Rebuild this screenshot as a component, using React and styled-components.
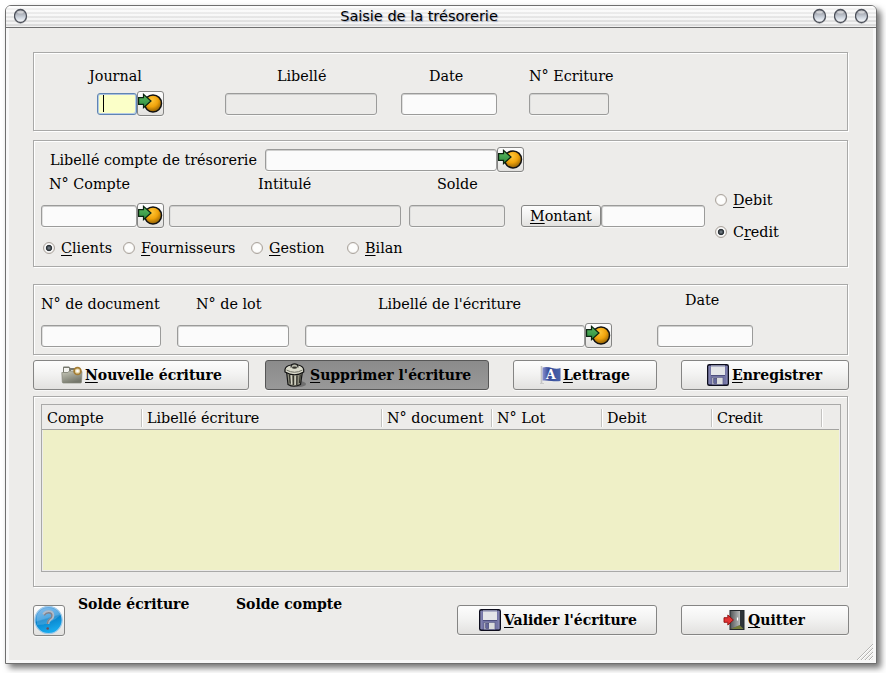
import React from 'react';
import styled, { createGlobalStyle, css } from 'styled-components';

const Global = createGlobalStyle`
  * { box-sizing: border-box; }
  body { margin: 0; background: #fff; overflow: hidden; }
`;

const serif = `'DejaVu Serif', serif`;

const Desktop = styled.div`
  width: 886px;
  height: 673px;
  padding: 5px 0 0 5px;
  background: #fff;
  color: #000;
  font: 14.35px/20px ${serif};
`;

const Window = styled.div`
  width: 872px;
  height: 659px;
  border: 1px solid #6f6f6f;
  border-radius: 6px 6px 0 0;
  background: #f8f8f8;
  box-shadow: 4px 4px 6px rgba(0, 0, 0, 0.55);
`;

const TitleBar = styled.header`
  display: flex;
  align-items: flex-start;
  height: 22px;
  padding: 2px 7px 0 8px;
  border-bottom: 1px solid #6f6f6f;
  border-radius: 5px 5px 0 0;
  background:
    linear-gradient(rgba(255, 255, 255, 0.7), rgba(215, 215, 215, 0.2)),
    repeating-linear-gradient(#f8f8f8 0 2px, #dadada 2px 4px);
`;

const Title = styled.h1`
  flex: 1;
  margin: -2px 0 0;
  padding-right: 3px;
  text-align: center;
  font: 14.5px/20px 'DejaVu Sans', sans-serif;
  text-shadow: 1px 1px 1px #9aa4bb;
`;

const Controls = styled.div`
  display: flex;
  gap: 7px;
`;

const Client = styled.main`
  height: 632px;
  margin: 0 3px 3px;
  padding: 24px 0 0 24px;
  background: #edecea;
  position: relative;
`;

const Panel = styled.section`
  width: 815px;
  height: ${p => p.$h}px;
  margin-bottom: ${p => p.$mb}px;
  padding: ${p => p.$pad};
  border: 1px solid #a9a9a8;
  box-shadow: 1px 1px 0 #fff, inset 1px 1px 0 #fff;
`;

const Row = styled.div`
  display: flex;
  align-items: ${p => p.$align || 'center'};
  height: ${p => p.$h}px;
  margin-bottom: ${p => p.$mb || 0}px;
`;

const Split = styled.div`
  display: flex;
`;

const LeftColumn = styled.div`
  width: 671px;
`;

const RadioColumn = styled.div`
  display: flex;
  flex-direction: column;
  gap: 12px;
  padding: 43px 0 0 3px;
`;

const Label = styled.span`
  flex: none;
  align-self: ${p => (p.$top ? 'flex-start' : 'auto')};
  width: ${p => p.$w}px;
  margin-left: ${p => p.$ml || 0}px;
  white-space: nowrap;
  ${p => p.$bold && css`
    font-size: 14px;
    font-weight: bold;
  `}
`;

const Input = styled.div`
  flex: none;
  width: ${p => p.$w}px;
  height: 22px;
  margin-left: ${p => p.$ml || 0}px;
  border: 1px solid #9b9b9a;
  border-radius: 3px;
  background: ${p => (p.$disabled ? '#ecebe9' : '#fbfbfb')};
  box-shadow: inset 0 1px 0 #cfcfce, inset 1px 0 0 #e0e0df, 0 1px 0 #f8f8f7;
  ${p => p.$focused && css`
    display: flex;
    align-items: center;
    padding-left: 5px;
    border-color: #5f84b4;
    background: #fbffc8;
    box-shadow: inset 0 1px 0 #a9c0dd, inset 1px 0 0 #b5cbe6, inset -1px -1px 0 #b5cbe6;
  `}
`;

const Caret = styled.i`
  width: 1px;
  height: 17px;
  background: #000;
`;

const raised = css`
  border: 1px solid #858584;
  border-radius: 3px;
  background: linear-gradient(#fdfdfd, #f3f3f2 45%, #e2e1df);
  box-shadow: 0 1px 0 #f8f8f7;
  color: #000;
`;

const IconButton = styled.button`
  ${raised}
  display: flex;
  flex: none;
  width: ${p => p.$w}px;
  height: ${p => p.$h}px;
  padding: 0;
`;

const Button = styled.button`
  ${raised}
  display: flex;
  flex: none;
  align-items: center;
  width: ${p => p.$w}px;
  height: ${p => p.$h || 30}px;
  margin-left: ${p => p.$ml || 0}px;
  padding: 0 0 0 ${p => p.$pl}px;
  font: ${p => (p.$plain ? 'normal 14.35px' : 'bold 14px')}/20px ${serif};
  white-space: nowrap;
  ${p => p.$pressed && css`
    border-color: #565656;
    background: linear-gradient(#8b8b8b, #999);
  `}
  svg { flex: none; margin-right: ${p => p.$gap || 0}px; }
`;

const Key = styled.span`
  text-decoration: underline;
  text-decoration-thickness: 1px;
  text-underline-offset: 2px;
  text-decoration-skip-ink: none;
`;

const RadioItem = styled.label`
  display: flex;
  flex: none;
  align-items: center;
  gap: 6px;
  width: ${p => p.$w}px;
  height: 20px;
  white-space: nowrap;
`;

const Dot = styled.i`
  flex: none;
  width: 12px;
  height: 12px;
  border: 1px solid #aaa39c;
  border-radius: 50%;
  background: ${p => (p.$on
    ? 'radial-gradient(circle at 5px 5px, #85909a 0, #2b3237 2.4px, #2b3237 2.8px, #fdfdfd 3.6px)'
    : '#fdfdfc')};
  box-shadow: inset 0 0 1px #bbb3ab;
`;

const Table = styled.div`
  width: 800px;
  height: 168px;
  padding: 1px;
  border: 1px solid #a9a9a8;
`;

const HeaderRow = styled.div`
  display: flex;
  align-items: center;
  height: 24px;
  margin-left: -1px;
  border-bottom: 1px solid #a3a3a0;
`;

const HeaderCell = styled.div`
  width: ${p => p.$w}px;
  height: 18px;
  padding-left: 5px;
  border-right: 1px solid #c3c2c0;
  box-shadow: 1px 0 0 #fff;
  line-height: 18px;
  white-space: nowrap;
`;

const TableBody = styled.div`
  height: 140px;
  background: #eff0c7;
`;

const Footer = styled.footer`
  display: flex;
  padding-top: 18px;
`;

const Balances = styled.div`
  display: flex;
  width: 392px;
  margin-top: -11px;
`;

const Grip = styled.svg`
  position: absolute;
  right: 0;
  bottom: 0;
`;

function Orb() {
  return (
    <svg width="14" height="16" viewBox="0 0 14 16">
      <defs>
        <linearGradient id="orb" x1="0" y1="0" x2="0" y2="1">
          <stop offset="0" stopColor="#6d7078" />
          <stop offset=".3" stopColor="#a9adb6" />
          <stop offset=".65" stopColor="#d3dae3" />
          <stop offset="1" stopColor="#fff" />
        </linearGradient>
      </defs>
      <ellipse cx="6.500" cy="8.900" rx="6.500" ry="7" fill="#aaa" opacity=".7" />
      <ellipse cx="6.500" cy="8" rx="6" ry="6.500" fill="url(#orb)" stroke="#4d515b" strokeWidth="1.300" />
      <ellipse cx="6.500" cy="4" rx="3.300" ry="1.500" fill="#fff" opacity=".55" />
    </svg>
  );
}

function GoIcon() {
  return (
    <svg width="25" height="23" viewBox="0 0 25 23">
      <defs>
        <radialGradient id="ball" cx=".42" cy=".32" r=".75">
          <stop offset="0" stopColor="#ffc73a" />
          <stop offset=".5" stopColor="#f0a30b" />
          <stop offset="1" stopColor="#7b5204" />
        </radialGradient>
        <linearGradient id="arrow" x1="0" y1="0" x2="0" y2="1">
          <stop offset="0" stopColor="#5dbb62" />
          <stop offset="1" stopColor="#2b8b3c" />
        </linearGradient>
      </defs>
      <circle cx="15" cy="11.400" r="8.500" fill="url(#ball)" stroke="#111" strokeWidth="1.500" />
      <path d="M.6 5.700H5.500V2.300L13 9 5.500 15.600v-3.300H.6z" fill="url(#arrow)" stroke="#0b2410" strokeWidth="1.200" />
    </svg>
  );
}

function FolderIcon() {
  return (
    <svg width="22" height="18" viewBox="0 0 22 18">
      <defs>
        <linearGradient id="folder" x1="0" y1="0" x2=".5" y2="1">
          <stop offset="0" stopColor="#c9cabb" />
          <stop offset="1" stopColor="#74766a" />
        </linearGradient>
      </defs>
      <path d="M2 15V1.500q0-1 1-1h5L9.500 2H19v13z" fill="#77796f" />
      <path d="M3 2h5v4H3zM10 4h7v2h-7z" fill="#f4f4f0" />
      <path d="M.8 6.500h5.700L8.500 5H20q1 0 1 1l-.5 10q0 1-1 1H2.300q-1 0-1-1z" fill="url(#folder)" stroke="#85877a" strokeWidth=".7" />
      <circle cx="16.500" cy="5" r="3.400" fill="#e8d9ad" stroke="#a37c33" strokeWidth="1.700" />
      <circle cx="16.500" cy="5" r="1.300" fill="#fff" />
    </svg>
  );
}

function TrashIcon() {
  return (
    <svg width="24" height="26" viewBox="0 0 24 26">
      <ellipse cx="15" cy="22" rx="7" ry="3" fill="#555" opacity=".6" />
      <path d="M2.500 9L4 22.500q6 3.500 12.500 0L18.500 9z" fill="#8e8e7e" stroke="#161616" strokeWidth="1.200" />
      <path d="M5.500 12.500l.7 9M9.300 13.500v9.500M13 13.500l-.2 9.500M16.300 12.500l-.8 8.500" stroke="#34342d" strokeWidth="1.300" />
      <path d="M7.300 13l.4 9.500M11.200 13.500V23" stroke="#d5d5c6" strokeWidth="1.300" />
      <path d="M1 7.500Q1.500 4 7 3q3.500-2 7 0 5 1 5.700 4.500v2.500q-9 5.500-18.700 0z" fill="#d9d9ca" stroke="#111" strokeWidth="1.200" />
      <path d="M2.500 8q8 4.500 16 0" fill="none" stroke="#6f7065" />
      <path d="M7 5.500Q7 2 10.500 2T14 5.500" fill="#bbbcae" stroke="#222" strokeWidth="1.100" />
      <ellipse cx="10.500" cy="5.700" rx="2.500" ry="1.100" fill="#34342d" />
    </svg>
  );
}

const FlagLetter = styled.text`
  font: bold 12.5px ${serif};
  fill: #fff;
`;

function FlagIcon() {
  return (
    <svg width="22" height="20" viewBox="0 0 22 20">
      <defs>
        <linearGradient id="flag">
          <stop offset="0" stopColor="#8a8fcc" />
          <stop offset=".35" stopColor="#354a98" />
          <stop offset="1" stopColor="#4a64ac" />
        </linearGradient>
      </defs>
      <path d="M1.500 1v17" stroke="#c4c4c4" strokeWidth="1.600" />
      <path d="M0 18.500h4" stroke="#c9c9c9" />
      <path d="M2.500 2.500Q7 1.500 12 3t8.500 0v13q-4.500 .7-9 0t-9-.5z" fill="url(#flag)" />
      <FlagLetter x="6" y="14">A</FlagLetter>
    </svg>
  );
}

function FloppyIcon() {
  return (
    <svg width="22" height="22" viewBox="0 0 22 22">
      <rect x=".75" y=".75" width="20.500" height="20.500" rx="1.500" fill="#7475a6" stroke="#0d0d1c" strokeWidth="1.500" />
      <path d="M2 2v18M20 2v18" stroke="#9596bf" strokeWidth=".8" />
      <rect x="4" y="1.500" width="14" height="9.500" fill="#e4e5e8" />
      <path d="M4 2h14" stroke="#7e81a8" strokeWidth="1" />
      <path d="M4 11.500h14" stroke="#4d4e7c" />
      <rect x="5" y="13.300" width="11" height="7.200" fill="#dadbdc" stroke="#5a5b87" strokeWidth=".7" />
      <rect x="6.700" y="14.300" width="3" height="5.200" fill="#63659c" stroke="#45466f" strokeWidth=".6" />
    </svg>
  );
}

function DoorIcon() {
  return (
    <svg width="22" height="22" viewBox="0 0 22 22">
      <defs>
        <linearGradient id="door">
          <stop offset="0" stopColor="#55585a" />
          <stop offset="1" stopColor="#b9bcbc" />
        </linearGradient>
      </defs>
      <rect x="7" y="1.500" width="14" height="19" fill="#2d3338" stroke="#23282c" />
      <path d="M7.500 20l9-4 4 4z" fill="#757d3a" />
      <path d="M7.500 2H17v14l-9.500 4z" fill="url(#door)" />
      <path d="M14.500 8.500v3" stroke="#fff" strokeWidth="1.200" />
      <path d="M1 8.700h3.800V6l5.600 5-5.600 5v-2.700H1z" fill="#e33434" stroke="#8f0c0c" strokeWidth=".9" />
    </svg>
  );
}

function HelpIcon() {
  return (
    <svg width="30" height="29" viewBox="0 0 30 29">
      <defs>
        <linearGradient id="help" x1="0" y1="0" x2=".3" y2="1">
          <stop offset="0" stopColor="#7fb5e8" />
          <stop offset=".5" stopColor="#3199dc" />
          <stop offset=".55" stopColor="#0781ca" />
          <stop offset="1" stopColor="#18a9ec" />
        </linearGradient>
      </defs>
      <circle cx="14.500" cy="14" r="13.700" fill="url(#help)" stroke="#a3cbe9" strokeWidth="1.200" />
      <path d="M3 19Q16 19 26.500 9 23 2 14.500 2T3 10z" fill="#fff" opacity=".17" />
      <path d="M9.500 8.500Q11 5.500 14.500 5.500q4.500 0 4.500 4 0 2.500-2.500 4t-2.500 4.500" fill="none" stroke="#b0bac8" strokeWidth="2.600" />
      <path d="M10.200 9.300Q12 6.800 14.700 6.800q3.200 0 3.200 2.900 0 2-2.200 3.300t-2.300 5" fill="none" stroke="#82828c" strokeWidth="1.400" />
      <circle cx="13.700" cy="22.500" r="1.300" fill="#744b55" />
    </svg>
  );
}

function LookupButton() {
  return <IconButton $w={27} $h={25}><GoIcon /></IconButton>;
}

function Radio({ on, w, pre = '', letter, children }) {
  return (
    <RadioItem $w={w}>
      <Dot $on={on} />
      <span>{pre}<Key>{letter}</Key>{children}</span>
    </RadioItem>
  );
}

const columns = [
  ['Compte', 100], ['Libellé écriture', 240], ['N° document', 110],
  ['N° Lot', 110], ['Debit', 110], ['Credit', 110],
];

export default function App() {
  return (
    <Desktop>
      <Global />
      <Window>
        <TitleBar>
          <Orb />
          <Title>Saisie de la trésorerie</Title>
          <Controls><Orb /><Orb /><Orb /></Controls>
        </TitleBar>
        <Client>
          <Panel $h={79} $mb={9} $pad="13px 0 0 7px">
            <Row $h={20} $mb={5}>
              <Label $ml={48} $w={188}>Journal</Label>
              <Label $w={152}>Libellé</Label>
              <Label $w={100}>Date</Label>
              <Label $w={100}>N° Ecriture</Label>
            </Row>
            <Row $h={25}>
              <Input $ml={56} $w={40} $focused><Caret /></Input>
              <LookupButton />
              <Input $ml={61} $w={152} $disabled />
              <Input $ml={24} $w={96} />
              <Input $ml={32} $w={80} $disabled />
            </Row>
          </Panel>

          <Panel $h={127} $mb={17} $pad="6px 0 0 7px">
            <Split>
              <LeftColumn>
                <Row $h={25} $mb={2}>
                  <Label $ml={9} $w={215}>Libellé compte de trésorerie</Label>
                  <Input $w={232} />
                  <LookupButton />
                </Row>
                <Row $h={20} $mb={9}>
                  <Label $ml={8} $w={209}>N° Compte</Label>
                  <Label $w={179}>Intitulé</Label>
                  <Label $w={60}>Solde</Label>
                </Row>
                <Row $h={25} $mb={10}>
                  <Input $w={96} />
                  <LookupButton />
                  <Input $ml={5} $w={232} $disabled />
                  <Input $ml={8} $w={96} $disabled />
                  <Button $ml={16} $w={80} $h={22} $pl={8} $plain><span><Key>M</Key>ontant</span></Button>
                  <Input $w={104} />
                </Row>
                <Row $h={20}>
                  <Label $w={2} />
                  <Radio w={80} letter="C" on>lients</Radio>
                  <Radio w={128} letter="F">ournisseurs</Radio>
                  <Radio w={96} letter="G">estion</Radio>
                  <Radio w={80} letter="B">ilan</Radio>
                </Row>
              </LeftColumn>
              <RadioColumn>
                <Radio w={80} letter="D">ebit</Radio>
                <Radio w={80} pre="C" letter="r" on>edit</Radio>
              </RadioColumn>
            </Split>
          </Panel>

          <Panel $h={71} $mb={5} $pad="5px 0 0 7px">
            <Row $h={24} $mb={9} $align="flex-end">
              <Label $w={155}>N° de document</Label>
              <Label $w={182}>N° de lot</Label>
              <Label $w={307}>Libellé de l'écriture</Label>
              <Label $w={60} $top>Date</Label>
            </Row>
            <Row $h={25}>
              <Input $w={120} />
              <Input $ml={16} $w={112} />
              <Input $ml={16} $w={280} />
              <LookupButton />
              <Input $ml={45} $w={96} />
            </Row>
          </Panel>

          <Row $h={30} $mb={6}>
            <Button $w={216} $pl={27} $gap={2}><FolderIcon /><span><Key>N</Key>ouvelle écriture</span></Button>
            <Button $ml={16} $w={224} $pl={18} $gap={2} $pressed><TrashIcon /><span><Key>S</Key>upprimer l'écriture</span></Button>
            <Button $ml={24} $w={144} $pl={26} $gap={1}><FlagIcon /><span><Key>L</Key>ettrage</span></Button>
            <Button $ml={24} $w={168} $pl={25} $gap={3}><FloppyIcon /><span><Key>E</Key>nregistrer</span></Button>
          </Row>

          <Panel $h={191} $mb={0} $pad="7px 0 0 7px">
            <Table>
              <HeaderRow>
                {columns.map(([name, w]) => <HeaderCell key={name} $w={w}>{name}</HeaderCell>)}
              </HeaderRow>
              <TableBody />
            </Table>
          </Panel>

          <Footer>
            <IconButton $w={32} $h={31}><HelpIcon /></IconButton>
            <Balances>
              <Label $bold $ml={13} $w={158}>Solde écriture</Label>
              <Label $bold $w={120}>Solde compte</Label>
            </Balances>
            <Button $w={200} $pl={21} $gap={3}><FloppyIcon /><span><Key>V</Key>alider l'écriture</span></Button>
            <Button $ml={24} $w={168} $pl={41} $gap={3}><DoorIcon /><span><Key>Q</Key>uitter</span></Button>
          </Footer>
          <Grip width="17" height="17" viewBox="0 0 17 17">
            <path d="M1 17L17 1M5 17L17 5M9 17L17 9M13 17l4-4" stroke="#b5b4b2" />
            <path d="M2 17L17 2M6 17L17 6M10 17l7-7M14 17l3-3" stroke="#fff" />
          </Grip>
        </Client>
      </Window>
    </Desktop>
  );
}
